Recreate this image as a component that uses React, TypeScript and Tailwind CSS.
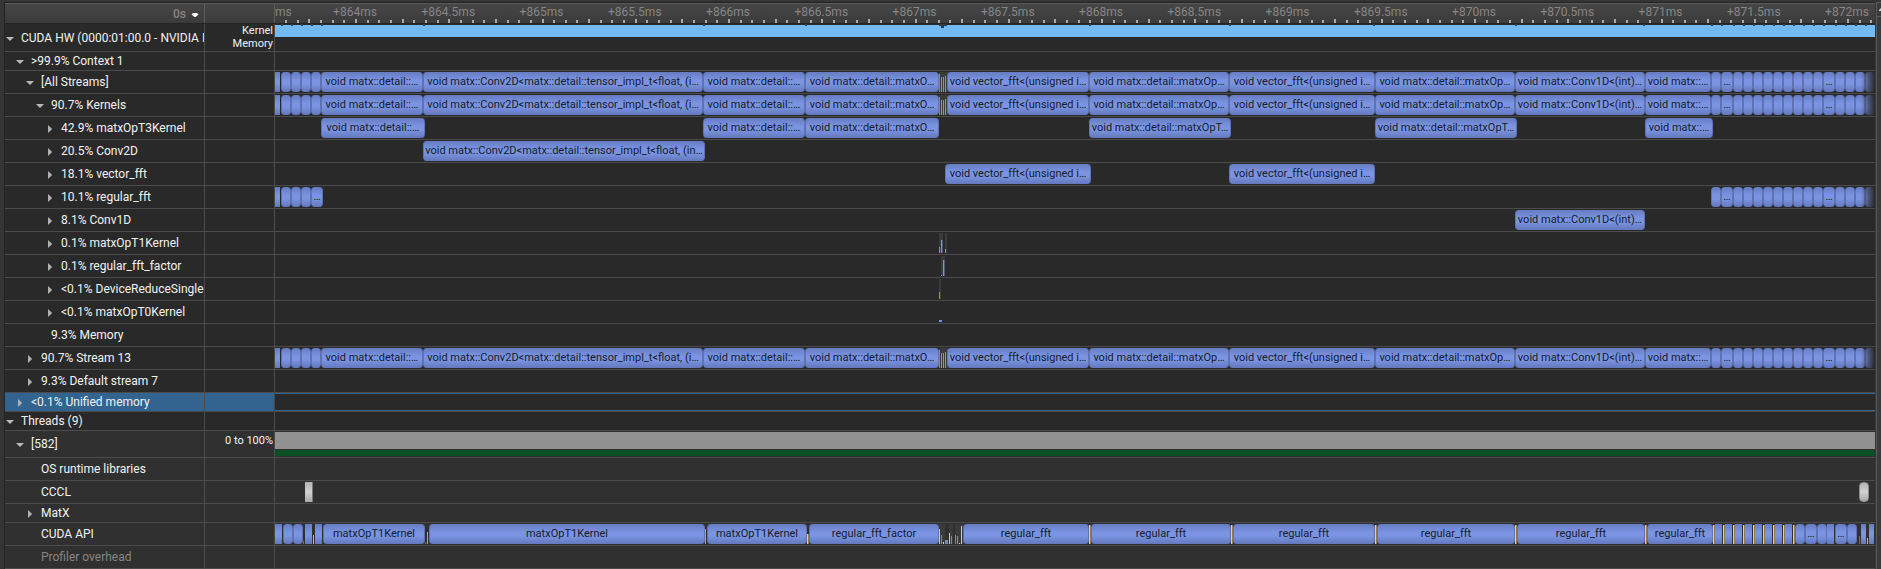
import React from "react";

/* Timeline units: the visible window runs from ORIGIN to ORIGIN + SPAN. */
const ORIGIN = 275;
const SPAN = 1600;
const place = (start: number, end: number): React.CSSProperties => ({
  left: `${((start - ORIGIN) / SPAN) * 100}%`,
  width: `${((end - start) / SPAN) * 100}%`,
});

type Shape = "pill" | "block";
type Range = { s: number; e: number; text?: string; shape?: Shape };
type Mark = { s: number; e?: number; h: number; color: string };

const r = (s: number, e: number, text?: string, shape?: Shape): Range => ({ s, e, text, shape });

const leftBurst: Range[] = [r(275, 280, "", "block"), r(281, 291), r(291, 301), r(301, 311)];
const rightEdges = [1711, 1721, 1733, 1743, 1753, 1763, 1773, 1783, 1793, 1803, 1813, 1823, 1835, 1845, 1855, 1865, 1875];
const rightBurst: Range[] = rightEdges
  .slice(0, -1)
  .map((s, i) => r(s, rightEdges[i + 1], i === 1 || i === 11 ? "…" : ""));

const streamRanges: Range[] = [
  ...leftBurst,
  r(311, 321),
  r(321, 423, "void matx::detail::…"),
  r(423, 703, "void matx::Conv2D<matx::detail::tensor_impl_t<float, (i…"),
  r(703, 805, "void matx::detail::…"),
  r(805, 939, "void matx::detail::matxO…"),
  r(947, 1089, "void vector_fft<(unsigned i…"),
  r(1089, 1229, "void matx::detail::matxOp…"),
  r(1229, 1375, "void vector_fft<(unsigned i…"),
  r(1375, 1515, "void matx::detail::matxOp…"),
  r(1515, 1645, "void matx::Conv1D<(int)…"),
  r(1645, 1711, "void matx::…"),
  ...rightBurst,
];
const streamMarks: Mark[] = [
  { s: 939, e: 948, h: 20, color: "#3b3b3b" },
  { s: 939, h: 18, color: "#7289d0" },
  { s: 941, h: 15, color: "#8a94b0" },
  { s: 943, h: 15, color: "#8a94b0" },
  { s: 945, h: 16, color: "#8a94b0" },
];

const apiBlocks = [1715, 1725, 1735, 1745, 1755, 1765, 1775, 1785].map((s) => r(s, s + 7, "", "block"));
const apiRanges: Range[] = [
  r(275, 282, "", "block"),
  r(283, 293),
  r(293, 303),
  r(305, 312, "", "block"),
  r(315, 322, "", "block"),
  r(323, 425, "matxOpT1Kernel"),
  r(429, 705, "matxOpT1Kernel"),
  r(707, 807, "matxOpT1Kernel"),
  r(809, 939, "regular_fft_factor"),
  r(963, 1089, "regular_fft"),
  r(1091, 1231, "regular_fft"),
  r(1233, 1375, "regular_fft"),
  r(1377, 1515, "regular_fft"),
  r(1517, 1645, "regular_fft"),
  r(1647, 1713, "regular_fft"),
  ...apiBlocks,
  r(1795, 1805),
  r(1805, 1817, "…"),
  r(1817, 1827),
  r(1827, 1834, "", "block"),
  r(1835, 1847, "…"),
  r(1847, 1857),
  r(1861, 1866, "", "block"),
  r(1869, 1874, "", "block"),
];
const YELLOW = "#f3cd85";
const AMBER = "#94794c";
const RED = "#e04040";
const PINK = "#e8a0a0";
const GREEN = "#62d84e";
const syncMarks: Mark[] = [1089, 1231, 1375, 1515, 1645, 1713, 1723, 1733, 1743, 1753, 1763, 1773, 1783, 1793].flatMap(
  (s) => [
    { s, h: 19, color: YELLOW },
    { s: s + 1, h: 19, color: AMBER },
  ],
);
const apiMarks: Mark[] = [
  { s: 303, h: 3, color: RED },
  { s: 313, h: 9, color: PINK },
  { s: 425, h: 2, color: RED },
  { s: 427, h: 12, color: GREEN },
  { s: 705, h: 15, color: GREEN },
  { s: 807, h: 10, color: YELLOW },
  { s: 808, h: 10, color: AMBER },
  { s: 939, e: 945, h: 20, color: "#3b3b3b" },
  { s: 949, e: 953, h: 20, color: "#3b3b3b" },
  { s: 955, e: 963, h: 20, color: "#3b3b3b" },
  { s: 939, h: 15, color: "#c9c9c9" },
  { s: 941, h: 9, color: "#7289d0" },
  { s: 943, h: 2, color: YELLOW },
  { s: 945, e: 948, h: 4, color: "#7289d0" },
  { s: 949, h: 11, color: "#c9c9c9" },
  { s: 951, h: 8, color: "#7289d0" },
  { s: 955, h: 9, color: "#7289d0" },
  { s: 957, h: 8, color: "#7289d0" },
  { s: 959, h: 1, color: YELLOW },
  { s: 961, h: 18, color: "#c9c9c9" },
  ...syncMarks,
  { s: 1859, h: 8, color: RED },
  { s: 1867, h: 6, color: PINK },
];

const notches = [282, 292, 302, 312, 322, 424, 704, 806, 1090, 1230, 1374, 1516, 1644, 1712, 1722, 1734, 1744, 1754, 1764, 1774, 1784, 1794, 1804, 1814, 1824, 1836, 1846, 1856, 1866];

type RowData = {
  label: string;
  depth: number;
  state?: "open" | "closed";
  size?: "tall" | "short" | "usage";
  dim?: boolean;
  lower?: boolean;
  selected?: boolean;
  ranges?: Range[];
  marks?: Mark[];
  fade?: boolean;
  kind?: "hw" | "usage" | "cccl";
};

const DARK = "#3a3a3a";
const BLUE = "#7a94e0";

const rows: RowData[] = [
  { label: "CUDA HW (0000:01:00.0 - NVIDIA I", depth: 0, state: "open", size: "tall", kind: "hw" },
  { label: ">99.9% Context 1", depth: 1, state: "open", size: "short" },
  { label: "[All Streams]", depth: 2, state: "open", ranges: streamRanges, marks: streamMarks, fade: true },
  { label: "90.7% Kernels", depth: 3, state: "open", ranges: streamRanges, marks: streamMarks, fade: true },
  {
    label: "42.9% matxOpT3Kernel",
    depth: 4,
    state: "closed",
    ranges: [
      r(321, 425, "void matx::detail::…"),
      r(703, 805, "void matx::detail::…"),
      r(805, 939, "void matx::detail::matxO…"),
      r(1089, 1231, "void matx::detail::matxOpT…"),
      r(1375, 1517, "void matx::detail::matxOpT…"),
      r(1645, 1713, "void matx::…"),
    ],
  },
  {
    label: "20.5% Conv2D",
    depth: 4,
    state: "closed",
    ranges: [r(423, 705, "void matx::Conv2D<matx::detail::tensor_impl_t<float, (in…")],
  },
  {
    label: "18.1% vector_fft",
    depth: 4,
    state: "closed",
    ranges: [r(945, 1091, "void vector_fft<(unsigned i…"), r(1229, 1375, "void vector_fft<(unsigned i…")],
  },
  {
    label: "10.1% regular_fft",
    depth: 4,
    state: "closed",
    ranges: [...leftBurst, r(311, 323, "…"), ...rightBurst],
    fade: true,
  },
  { label: "8.1% Conv1D", depth: 4, state: "closed", ranges: [r(1515, 1645, "void matx::Conv1D<(int)…")] },
  {
    label: "0.1% matxOpT1Kernel",
    depth: 4,
    state: "closed",
    marks: [
      { s: 939, e: 943, h: 20, color: DARK },
      { s: 945, e: 947, h: 20, color: DARK },
      { s: 939, h: 6, color: BLUE },
      { s: 941, h: 13, color: BLUE },
      { s: 942, h: 13, color: "#4b5779" },
      { s: 945, h: 4, color: BLUE },
    ],
  },
  {
    label: "0.1% regular_fft_factor",
    depth: 4,
    state: "closed",
    marks: [
      { s: 941, e: 945, h: 20, color: DARK },
      { s: 941, h: 1, color: BLUE },
      { s: 943, h: 16, color: BLUE },
      { s: 944, h: 16, color: "#4b5779" },
    ],
  },
  {
    label: "<0.1% DeviceReduceSingle",
    depth: 4,
    state: "closed",
    marks: [
      { s: 939, e: 941, h: 20, color: DARK },
      { s: 939, h: 7, color: BLUE },
    ],
  },
  { label: "<0.1% matxOpT0Kernel", depth: 4, state: "closed", marks: [{ s: 939, e: 942, h: 2, color: BLUE }] },
  { label: "9.3% Memory", depth: 3 },
  { label: "90.7% Stream 13", depth: 2, state: "closed", ranges: streamRanges, marks: streamMarks, fade: true },
  { label: "9.3% Default stream 7", depth: 2, state: "closed" },
  { label: "<0.1% Unified memory", depth: 1, state: "closed", size: "short", selected: true },
  { label: "Threads (9)", depth: 0, state: "open", size: "short" },
  { label: "[582]", depth: 1, state: "open", size: "usage", lower: true, kind: "usage" },
  { label: "OS runtime libraries", depth: 2, lower: true },
  { label: "CCCL", depth: 2, lower: true, kind: "cccl" },
  { label: "MatX", depth: 2, state: "closed", size: "short", lower: true },
  { label: "CUDA API", depth: 2, lower: true, ranges: apiRanges, marks: apiMarks },
  { label: "Profiler overhead", depth: 2, lower: true, dim: true },
];

const indents = ["pl-[5px]", "pl-[15px]", "pl-[25px]", "pl-[35px]", "pl-[45px]"];
const heights = { tall: "h-[28px]", short: "h-[19px]", usage: "h-[27px]", normal: "h-[23px]" };
const columns = "grid grid-cols-[200px_70px_minmax(0,1fr)]";

function Arrow({ open }: { open: boolean }) {
  return open ? (
    <svg viewBox="0 0 10 10" className="mt-[2px] h-[10px] w-[10px]" fill="#b9b9b9" aria-hidden="true">
      <path d="M1 3H9L5 7Z" />
    </svg>
  ) : (
    <svg viewBox="0 0 10 10" className="mt-[2px] h-[10px] w-[10px]" fill="#b0b0b0" aria-hidden="true">
      <path d="M3 1V9L7.200 5Z" />
    </svg>
  );
}

function Bar({ range }: { range: Range }) {
  return (
    <div
      style={place(range.s, range.e)}
      className={`absolute top-[1px] flex h-[20px] items-center justify-center overflow-hidden bg-[linear-gradient(#667bc1,#7a94e2_40%,#7a94e2_60%,#6377bb)] text-[11px] leading-[20px] whitespace-nowrap text-[#151b2b] ${
        range.shape === "block" ? "" : "rounded-[4px] border-x border-[#5f73b4]"
      }`}
    >
      {range.text}
    </div>
  );
}

function Marks({ marks }: { marks: Mark[] }) {
  return (
    <>
      {marks.map((m, i) => (
        <div
          key={i}
          className="absolute bottom-[1px]"
          style={{ ...place(m.s, m.e ?? m.s + 1), height: m.h, backgroundColor: m.color }}
        />
      ))}
    </>
  );
}

function Track({ row }: { row: RowData }) {
  return (
    <div className={`relative min-w-0 overflow-hidden ${row.selected ? "border-y border-[#33648f]" : ""}`}>
      {row.kind === "hw" && (
        <>
          <div className="mt-[1px] h-[12px] bg-[#74baf2]" />
          {notches.map((n) => (
            <div key={n} className="absolute top-0 h-[2px] bg-[#2e4557]" style={place(n - 1, n + 1)} />
          ))}
          <div className="absolute top-0 h-[2px] bg-[#303a42]" style={place(939, 947)} />
          <div className="absolute top-0 h-[4px] bg-[#303a42]" style={place(941, 944)} />
        </>
      )}
      {row.kind === "usage" && (
        <div className="flex flex-col gap-px pt-px">
          <div className="h-[17px] bg-[#919191]" />
          <div className="h-[6px] bg-[#0b4f24]" />
        </div>
      )}
      {row.kind === "cccl" && (
        <>
          <div
            className="absolute top-[1px] h-[20px] border-r border-[#777] bg-[linear-gradient(#b2b2b2,#d2d2d2_50%,#a8a8a8)]"
            style={place(305, 313)}
          />
          <div
            className="absolute top-[1px] h-[20px] rounded-[4px] border border-[#8b8b8b] bg-[linear-gradient(#b2b2b2,#d2d2d2_50%,#a8a8a8)]"
            style={place(1859, 1869)}
          />
        </>
      )}
      {row.marks && <Marks marks={row.marks} />}
      {row.ranges?.map((range) => <Bar key={range.s} range={range} />)}
      {row.fade && (
        <div
          className="absolute top-0 h-full bg-[linear-gradient(to_right,transparent,#292929)]"
          style={place(1861, 1875)}
        />
      )}
    </div>
  );
}

function Row({ row }: { row: RowData }) {
  const fill = row.selected ? "bg-[#33648f]" : "";
  return (
    <div
      role="row"
      aria-selected={row.selected}
      className={`${columns} ${heights[row.size ?? "normal"]} border-b border-[#4b4b4b] ${
        row.lower ? "bg-[#303030]" : "bg-[#292929]"
      }`}
    >
      <div
        role="rowheader"
        className={`flex min-w-0 items-center overflow-hidden border-r border-[#4b4b4b] ${indents[row.depth]} ${fill}`}
      >
        <div className="-ml-[5px] flex w-[16px] shrink-0 items-center">
          {row.state && (
            <button type="button" aria-label={row.label} aria-expanded={row.state === "open"}>
              <Arrow open={row.state === "open"} />
            </button>
          )}
        </div>
        <span className={`whitespace-nowrap ${row.dim ? "text-[#858585]" : "text-[#f2f2f2]"}`}>{row.label}</span>
      </div>
      <div
        className={`border-r border-[#4b4b4b] pr-px text-right text-[11px] leading-[13px] whitespace-nowrap text-[#f2f2f2] ${fill}`}
      >
        {row.kind === "hw" && (
          <>
            <div>Kernel</div>
            <div>Memory</div>
          </>
        )}
        {row.kind === "usage" && <div className="pt-[3px]">0 to 100%</div>}
      </div>
      <Track row={row} />
    </div>
  );
}

const MAJOR_STEP = 93.25;
const rulerLabels = ["+864ms", "+864.5ms", "+865ms", "+865.5ms", "+866ms", "+866.5ms", "+867ms", "+867.5ms", "+868ms", "+868.5ms", "+869ms", "+869.5ms", "+870ms", "+870.5ms", "+871ms", "+871.5ms", "+872ms"];
const ticks = Array.from({ length: 137 }, (_, i) => ({
  x: Math.round(356 + ((i - 6) * MAJOR_STEP) / 8),
  tall: (i - 6) % 4 === 0,
}));

function Ruler() {
  return (
    <div className="relative overflow-hidden text-[#868686]">
      <span className="absolute top-0 left-0 leading-[16px]">ms</span>
      {rulerLabels.map((label, i) => {
        const x = 355 + i * MAJOR_STEP;
        return (
          <span
            key={label}
            className="absolute top-0 flex justify-center leading-[16px] whitespace-nowrap"
            style={place(x - 27, x + 27)}
          >
            {label}
          </span>
        );
      })}
      {ticks.map((t) => (
        <div
          key={t.x}
          className={`absolute bottom-0 bg-[#a9a9a9] ${t.tall ? "h-[4px]" : "h-[3px]"}`}
          style={place(t.x - 1, t.x + 1)}
        />
      ))}
    </div>
  );
}

export default function App() {
  return (
    <div className="flex bg-[#353535] font-['Roboto','Noto_Sans',sans-serif] text-[12px] leading-[16px]">
      <div className="mt-[2px] w-[5px] shrink-0 border-r border-[#242424]" />
      <main className="mt-[2px] min-w-0 flex-1 border-t border-[#222222]">
        <div
          className={`${columns} h-[21px] border-t border-b border-t-[#5c5c5c] border-b-[#242424] bg-[linear-gradient(#464646,#3b3b3b)]`}
        >
          <div className="flex items-center justify-end border-r border-[#5c5c5c] pr-[5px]">
            <button type="button" className="flex items-center gap-[5px] font-medium text-[#868686]">
              0s
              <svg viewBox="0 0 8 6" className="mt-[2px] h-[6px] w-[8px]" fill="#ffffff" aria-hidden="true">
                <path d="M2 1H6L7.500 2.500L4.500 5H3.500L0.500 2.500Z" />
              </svg>
            </button>
          </div>
          <div className="border-r border-[#5c5c5c]" />
          <Ruler />
        </div>
        <div role="treegrid" aria-label="Timeline">
          {rows.map((row) => (
            <Row key={row.label} row={row} />
          ))}
        </div>
      </main>
      <div className="mt-[2px] ml-[1px] flex w-[5px] shrink-0 flex-col overflow-hidden border-t border-l border-[#5a5a5a] bg-[#3a3a3a]">
        <div className="flex h-[14px] items-center justify-end border-b border-[#5a5a5a]">
          <svg viewBox="0 0 2 4" className="h-[4px] w-[2px]" fill="#d0d0d0" aria-hidden="true">
            <path d="M2 0V3H0V2Z" />
          </svg>
        </div>
      </div>
    </div>
  );
}
